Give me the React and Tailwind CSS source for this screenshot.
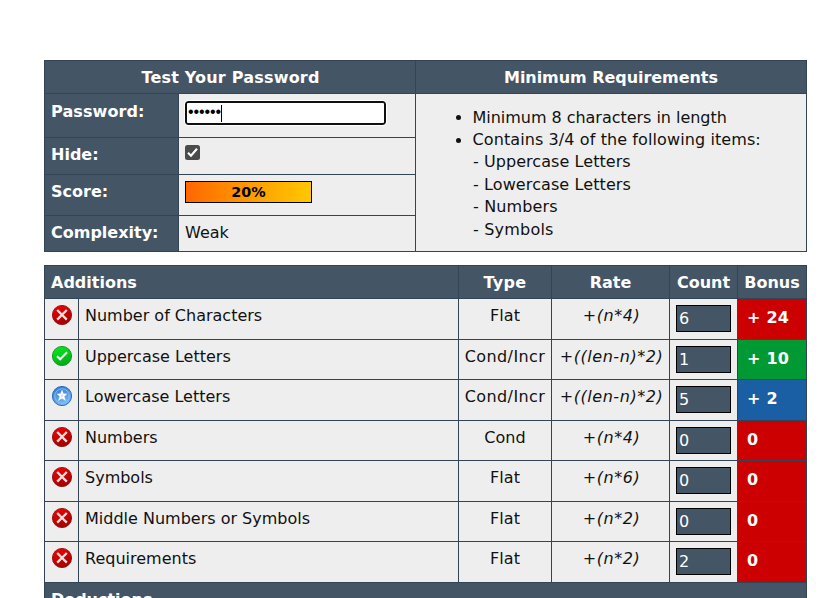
const additions = [
  { icon: 'fail', name: 'Number of Characters', type: 'Flat', rate: '+(n*4)', count: 6, bonus: '+ 24', bg: 'bg-[#cc0000]' },
  { icon: 'pass', name: 'Uppercase Letters', type: 'Cond/Incr', rate: '+((len-n)*2)', count: 1, bonus: '+ 10', bg: 'bg-[#009933]' },
  { icon: 'exceed', name: 'Lowercase Letters', type: 'Cond/Incr', rate: '+((len-n)*2)', count: 5, bonus: '+ 2', bg: 'bg-[#1a5ea4]' },
  { icon: 'fail', name: 'Numbers', type: 'Cond', rate: '+(n*4)', count: 0, bonus: '0', bg: 'bg-[#cc0000]' },
  { icon: 'fail', name: 'Symbols', type: 'Flat', rate: '+(n*6)', count: 0, bonus: '0', bg: 'bg-[#cc0000]' },
  { icon: 'fail', name: 'Middle Numbers or Symbols', type: 'Flat', rate: '+(n*2)', count: 0, bonus: '0', bg: 'bg-[#cc0000]' },
  { icon: 'fail', name: 'Requirements', type: 'Flat', rate: '+(n*2)', count: 2, bonus: '0', bg: 'bg-[#cc0000]' },
];

const palettes = {
  fail: ['#f40000', '#a00000', '#8c1010'],
  pass: ['#00f018', '#00a818', '#168a22'],
  exceed: ['#2f78d4', '#7dbcf6', '#1b5fb4'],
};

function StatusIcon({ kind }) {
  const [from, to, edge] = palettes[kind];
  const id = `status-${kind}`;
  return (
    <svg width="20" height="20" viewBox="0 0 20 20" className="block">
      <defs>
        <linearGradient id={id} x1="0.2" y1="0" x2="0.6" y2="1">
          <stop offset="0" stopColor={from} />
          <stop offset="1" stopColor={to} />
        </linearGradient>
      </defs>
      <circle cx="10" cy="10" r="9.6" fill={`url(#${id})`} stroke={edge} strokeWidth="0.9" />
      {kind === 'fail' && <path d="M5.2 5 14.8 14.6M14.8 5 5.2 14.6" stroke="#f3dede" strokeWidth="2.3" />}
      {kind === 'pass' && <path d="M5 10.3 8.2 13.2 15 6.2" fill="none" stroke="#fff" strokeWidth="2.1" />}
      {kind === 'exceed' && (
        <>
          <circle cx="10" cy="10" r="7.2" fill="none" stroke="#8fc2f5" strokeWidth="0.8" />
          <path d="M10 4.2 11.4 7.8 14.8 8 12.2 10.4 13.5 14.5 10 12.3 6.5 14.5 7.8 10.4 5.2 8 8.6 7.8Z" fill="#fff" stroke="#fff" strokeWidth="0.4" />
          <path d="M10 8.4V10.8" stroke="#9cc8f4" strokeWidth="1" />
        </>
      )}
    </svg>
  );
}

function Head({ children, className = '' }) {
  return <div className={`bg-[#445566] pt-1.5 font-bold text-white ${className}`}>{children}</div>;
}

function Cell({ children, className = '' }) {
  return <div className={`bg-[#eeeeee] pt-1.5 ${className}`}>{children}</div>;
}

export default function App() {
  return (
    <div className="h-[598px] w-[831px] overflow-hidden bg-white pl-11 pt-[60px] font-['DejaVu_Sans',Verdana,sans-serif] text-base leading-[22px] whitespace-nowrap text-[#111]">
      <div className="grid w-[763px] grid-cols-[133px_236px_390px] grid-rows-[32px_43px_36px_40px_35px] gap-px border border-[#334455] bg-[#334455]">
        <Head className="col-span-2 pl-px text-center tracking-[0.2px]">Test Your Password</Head>
        <Head className="text-center tracking-[-0.05px]">Minimum Requirements</Head>
        <Head className="pl-1.5 leading-6 tracking-[0.1px]">Password:</Head>
        <Cell className="pl-1.5">
          <div className="mt-px flex h-6 w-[201px] items-center rounded-[3px] border-2 border-[#101010] bg-white pl-px outline outline-white">
            <span className="-mt-0.5 font-['Liberation_Sans',Arial,sans-serif] tracking-[-0.1px] text-black">••••••</span>
            <span className="h-[17px] w-px bg-black" />
          </div>
        </Cell>
        <Cell className="col-start-3 row-span-4 row-start-2 pt-[12.6px] pl-[57px] leading-[22.4px]">
          <ul>
            <li className="flex items-center tracking-[-0.03px]">
              <span className="-ml-[17px] mr-[11.5px] size-[5px] shrink-0 rounded-full bg-[#111]" />
              Minimum 8 characters in length
            </li>
            <li className="flex items-center tracking-[0.1px]">
              <span className="-ml-[17px] mr-[11.5px] size-[5px] shrink-0 rounded-full bg-[#111]" />
              Contains 3/4 of the following items:
            </li>
            <li className="tracking-[0.06px]">- Uppercase Letters</li>
            <li className="tracking-[0.1px]">- Lowercase Letters</li>
            <li className="tracking-[0.15px]">- Numbers</li>
            <li className="tracking-[0.2px]">- Symbols</li>
          </ul>
        </Cell>
        <Head className="pl-1.5">Hide:</Head>
        <Cell className="pl-1.5 pt-[6.5px]">
          <svg width="15" height="15" viewBox="0 0 15 15" className="block">
            <rect width="15" height="15" rx="2.5" fill="#4b4b4b" />
            <path d="M3 7.8 6 10.8 12 3.8" fill="none" stroke="#fff" strokeWidth="2.1" />
          </svg>
        </Cell>
        <Head className="pl-1.5">Score:</Head>
        <Cell className="pl-1.5">
          <div className="h-[22px] w-[127px] border border-black bg-linear-to-r from-[#ff6600] to-[#ffc800] text-center text-[14.4px] leading-5 font-bold text-black">20%</div>
        </Cell>
        <Head className="pl-1.5">Complexity:</Head>
        <Cell className="pl-1.5">Weak</Cell>
      </div>

      <div className="mt-[13px] grid w-[763px] grid-cols-[33px_379px_92px_117px_67px_68px] grid-rows-[32px_40px_39px_40px_39px_40px_39px_40px_32px] gap-px border border-[#334455] bg-[#334455]">
        <Head className="col-span-2 pl-1.5">Additions</Head>
        <Head className="text-center tracking-[0.3px]">Type</Head>
        <Head className="text-center">Rate</Head>
        <Head className="text-center">Count</Head>
        <Head className="text-center">Bonus</Head>
        {additions.map((row) => (
          <div key={row.name} className="contents">
            <Cell className="pl-[7px]"><StatusIcon kind={row.icon} /></Cell>
            <Cell className="pl-1.5">{row.name}</Cell>
            <Cell className={row.type === 'Cond/Incr' ? 'text-center tracking-[0.4px]' : 'text-center tracking-[0.1px]'}>{row.type}</Cell>
            <Cell className="pl-0.5 text-center tracking-[0.55px] italic">{row.rate}</Cell>
            <Cell className="pl-1.5">
              <div className="h-[27px] w-[55px] border border-black bg-[#445566] pl-0.5 leading-[26px] text-white">{row.count}</div>
            </Cell>
            <div className={`pt-2 pl-[9px] font-bold tracking-[0.2px] text-white ${row.bg}`}>{row.bonus}</div>
          </div>
        ))}
        <Head className="col-span-6 pl-1.5">Deductions</Head>
      </div>
    </div>
  );
}
